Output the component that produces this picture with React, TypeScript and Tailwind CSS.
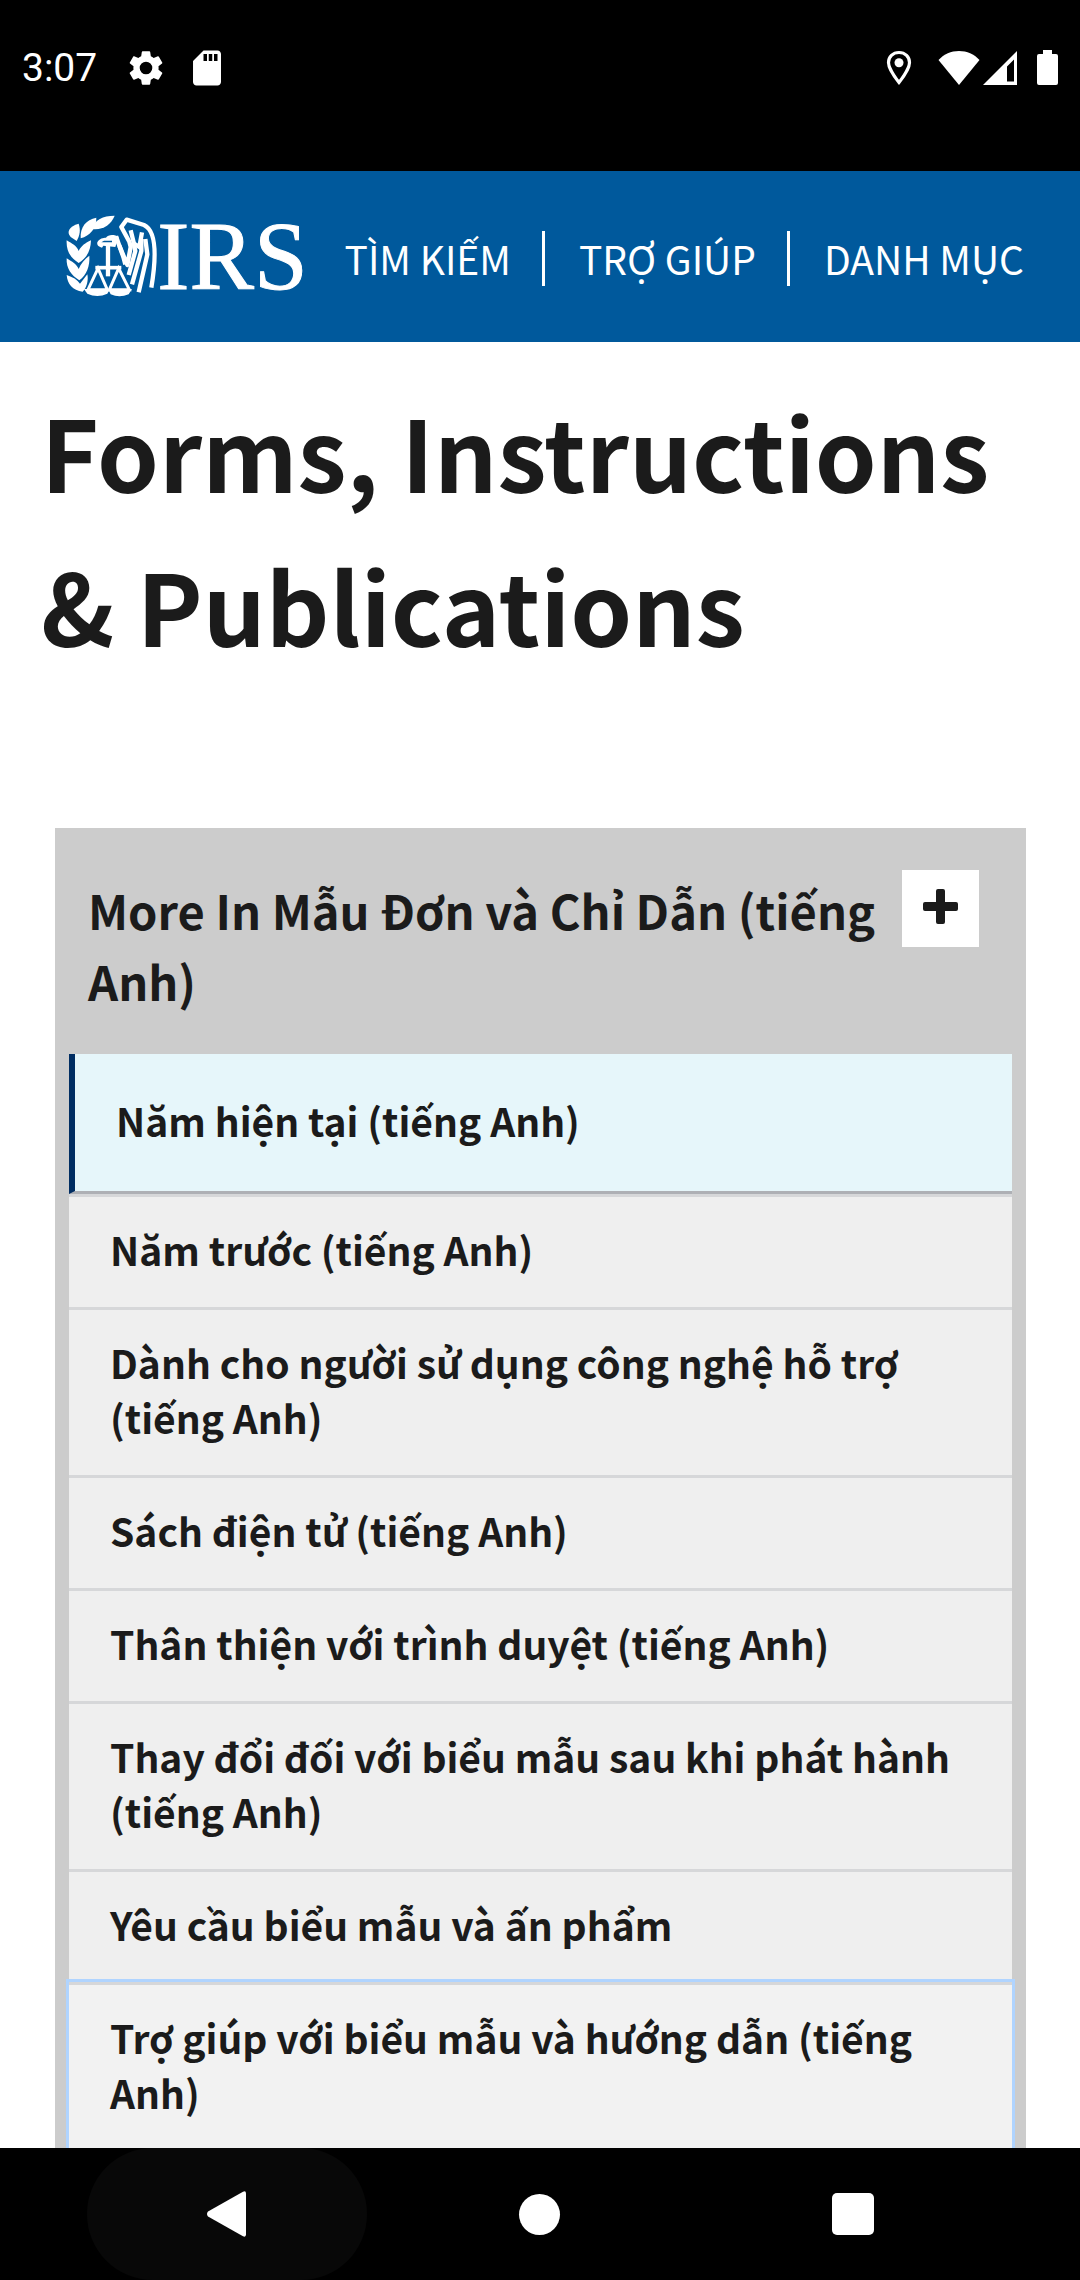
import React from "react";

type MenuItem = { label: string; state?: "current" | "focused" };

const headerLinks = ["TÌM KIẾM", "TRỢ GIÚP", "DANH MỤC"];

const menu: MenuItem[] = [
  { label: "Năm hiện tại (tiếng Anh)", state: "current" },
  { label: "Năm trước (tiếng Anh)" },
  { label: "Dành cho người sử dụng công nghệ hỗ trợ (tiếng Anh)" },
  { label: "Sách điện tử (tiếng Anh)" },
  { label: "Thân thiện với trình duyệt (tiếng Anh)" },
  { label: "Thay đổi đối với biểu mẫu sau khi phát hành (tiếng Anh)" },
  { label: "Yêu cầu biểu mẫu và ấn phẩm" },
  { label: "Trợ giúp với biểu mẫu và hướng dẫn (tiếng Anh)", state: "focused" },
];

function StatusBar() {
  return (
    <div className="flex h-[171px] shrink-0 items-start justify-between bg-black px-[22px] pt-[46px] font-['Roboto',sans-serif] text-white">
      <div className="flex h-11 items-center">
        <span className="text-[39px] leading-[48px]">3:07</span>
        <svg className="ml-[28px] size-[42px]" viewBox="0 0 24 24" fill="currentColor" aria-hidden="true">
          <path d="M19.14 12.94c.04-.3.06-.61.06-.94 0-.32-.02-.64-.07-.94l2.03-1.58a.49.49 0 0 0 .12-.61l-1.92-3.32a.488.488 0 0 0-.59-.22l-2.39.96c-.5-.38-1.03-.7-1.62-.94l-.36-2.54a.484.484 0 0 0-.48-.41h-3.84c-.24 0-.43.17-.47.41l-.36 2.54c-.59.24-1.13.57-1.62.94l-2.39-.96c-.22-.08-.47 0-.59.22L2.74 8.87c-.12.21-.08.47.12.61l2.03 1.58c-.05.3-.09.63-.09.94s.02.64.07.94l-2.03 1.58a.49.49 0 0 0-.12.61l1.92 3.32c.12.22.37.29.59.22l2.39-.96c.5.38 1.03.7 1.62.94l.36 2.54c.05.24.24.41.48.41h3.84c.24 0 .44-.17.47-.41l.36-2.54c.59-.24 1.13-.56 1.62-.94l2.39.96c.22.08.47 0 .59-.22l1.92-3.32c.12-.22.07-.47-.12-.61l-2.01-1.58zM12 15.6A3.6 3.6 0 1 1 12 8.4a3.6 3.6 0 0 1 0 7.200z" />
        </svg>
        <svg className="ml-[19px] size-[42px]" viewBox="0 0 24 24" fill="currentColor" aria-hidden="true">
          <path d="M18 2h-8L4.020 8 4 20c0 1.100.9 2 2 2h12c1.100 0 2-.9 2-2V4c0-1.100-.9-2-2-2zm-6 6h-2V4h2v4zm3 0h-2V4h2v4zm3 0h-2V4h2v4z" />
        </svg>
      </div>
      <div className="flex h-11 items-center">
        <svg className="h-[36px] w-[26px]" viewBox="0 0 26 36" aria-hidden="true">
          <path d="M13 2.500C6.800 2.500 2.500 7 2.500 12.600 2.500 19.500 13 32.500 13 32.500S23.500 19.500 23.500 12.600C23.500 7 19.200 2.500 13 2.500Z" fill="none" stroke="currentColor" strokeWidth="3.200" />
          <circle cx="13" cy="12.800" r="4.500" fill="currentColor" />
        </svg>
        <svg className="ml-[26px] h-[36px] w-[42px]" viewBox="0 0 42 36" fill="currentColor" aria-hidden="true">
          <path d="M21 35 0.500 10C6 4 13 1 21 1s15 3 20.500 9Z" />
        </svg>
        <svg className="ml-[2px] h-[36px] w-[36px]" viewBox="0 0 36 36" fill="currentColor" fillRule="evenodd" aria-hidden="true">
          <path d="M35 1V35H1ZM32 9.500 25 16.500V31.500H32Z" />
        </svg>
        <svg className="ml-[19px] h-[36px] w-[21px]" viewBox="0 0 21 36" fill="currentColor" aria-hidden="true">
          <path d="M6 0h9v4h4q2 0 2 2v27q0 2-2 2H2q-2 0-2-2V6q0-2 2-2h4Z" />
        </svg>
      </div>
    </div>
  );
}

function Logo() {
  return (
    <svg className="h-[120px] w-[248px] shrink-0" viewBox="0 -42 744 360" role="img" aria-label="IRS">
      {/* laurel branch */}
      <g fill="#fff">
        <path d="M158 14C122 14 98 26 90 54 122 58 146 42 158 14Z" />
        <path d="M103 20C72 26 54 48 56 82 84 74 104 52 103 20Z" />
        <path d="M50 38C22 46 12 62 26 78L44 90C54 72 56 56 50 38Z" />
        <path d="M14 88C30 98 44 104 50 120 58 104 70 96 87 88 86 118 76 140 50 156 28 142 12 122 14 88Z" />
        <path d="M14 142C30 152 44 160 50 174 56 158 68 144 82 134 84 166 74 192 52 208 28 194 12 172 14 142Z" />
        <path d="M14 192C32 198 46 206 54 218L76 190C80 206 74 232 62 242 32 238 16 220 14 192Z" />
      </g>
      {/* eagle head */}
      <path fill="#fff" fillRule="evenodd" d="M106 94C112 82 124 80 132 80 138 70 158 70 170 78L160 108 124 104 120 110C110 108 104 102 106 94ZM118 94H150V89H126Z" />
      {/* neck and wing */}
      <g fill="none" stroke="#fff" strokeWidth="13">
        <path d="M162 76 172 104 196 162 206 108 202 92 178 48 194 26 246 42C276 56 288 110 268 230" strokeLinejoin="round" />
        <path d="M172 104 184 138 190 160" />
        <path d="M206 58 216 98 232 108 240 64" />
        <path d="M214 94 220 120 200 192" />
        <path d="M238 84V120L210 220" />
        <path d="M250 84 256 130 230 244" />
      </g>
      {/* balance scales */}
      <g fill="none" stroke="#fff" strokeWidth="9">
        <path d="M138 104V196" strokeWidth="13" />
        <path d="M100 170H178" strokeWidth="11" />
        <path d="M108 172 78 236H136Z" />
        <path d="M170 172 142 236H202Z" />
      </g>
      <path fill="#fff" d="M66 234H144L136 248Q106 262 76 248ZM138 234H210L200 250Q172 262 146 250Z" />
      <text x="286" y="234" fill="#fff" stroke="#fff" strokeWidth="3" fontFamily="'Liberation Serif', serif" fontSize="290">IRS</text>
    </svg>
  );
}

function SiteHeader() {
  return (
    <header className="flex h-[171px] shrink-0 items-center justify-between bg-[#00599c] pr-14 pl-[62px] text-white">
      <a href="#home"><Logo /></a>
      <nav className="flex items-center pt-1">
        {headerLinks.map((label, i) => (
          <React.Fragment key={label}>
            {i > 0 && <span className="mr-[34px] ml-[31px] h-[55px] w-[3px] bg-white" />}
            <a href="#menu" className="text-[39px] leading-[55px] whitespace-nowrap">{label}</a>
          </React.Fragment>
        ))}
      </nav>
    </header>
  );
}

function MenuRow({ label, state }: MenuItem) {
  if (state === "current") {
    return (
      <li className="border-b-[3px] border-l-[6px] border-b-[#aeb0b5] border-l-[#002d62] bg-[#e6f6fa]">
        <a href="#item" aria-current="page" className="block pt-[39px] pr-10 pb-[43px] pl-[41px]">{label}</a>
      </li>
    );
  }
  return (
    <li
      className={
        state === "focused"
          ? "border-t-[3px] border-[#d6d7d9] bg-[#f2f2f2] outline-[3px] outline-[#b0d4ff]"
          : "border-t-[3px] border-[#d6d7d9] bg-[#efefef]"
      }
    >
      <a href="#item" className="block pt-[25px] pr-10 pb-[30px] pl-[41px]">{label}</a>
    </li>
  );
}

function NavBar() {
  return (
    <div className="grid h-[132px] shrink-0 grid-cols-3 bg-black px-[71px] text-white">
      <button type="button" aria-label="Back" className="mx-auto flex h-full w-[280px] items-center justify-center rounded-full bg-[#080808]">
        <svg className="h-[46px] w-[40px]" viewBox="0 0 40 46" fill="currentColor" aria-hidden="true">
          <path d="M1 20.500 36 .8q3-1.500 3 2v40.400q0 3.500-3 2L1 25.500q-2-2.500 0-5Z" />
        </svg>
      </button>
      <button type="button" aria-label="Home" className="flex h-full items-center justify-center">
        <span className="size-[41px] rounded-full bg-white" />
      </button>
      <button type="button" aria-label="Recent apps" className="flex h-full items-center justify-center">
        <span className="size-[42px] rounded-[5px] bg-white" />
      </button>
    </div>
  );
}

export default function App() {
  return (
    <div className="flex h-screen flex-col bg-white font-['Noto_Sans_CJK_SC',sans-serif] text-[#1b1b1b]" lang="vi">
      <StatusBar />
      <SiteHeader />
      <main className="min-h-0 flex-1 overflow-hidden">
        <h1 className="px-[41px] pt-[31px] text-[99px] leading-[154px] font-bold">Forms, Instructions &amp; Publications</h1>
        <section className="mt-[147px] mr-[54px] ml-[55px] bg-[#ccc] px-[14px] pb-[14px]">
          <div className="flex items-start justify-between pt-[42px] pr-[33px] pb-[38px] pl-[19px]">
            <h2 className="pt-1 text-[47px] leading-[71px] font-bold">More In Mẫu Đơn và Chỉ Dẫn (tiếng Anh)</h2>
            <button type="button" aria-label="Expand" className="flex size-[77px] shrink-0 items-center justify-center bg-white pb-1">
              <svg className="size-[35px]" viewBox="0 0 35 35" fill="currentColor" aria-hidden="true">
                <path d="M13 2q0-2 2-2h5q2 0 2 2v11h11q2 0 2 2v5q0 2-2 2H22v11q0 2-2 2h-5q-2 0-2-2V22H2q-2 0-2-2v-5q0-2 2-2h11Z" />
              </svg>
            </button>
          </div>
          <ul className="text-[39px] leading-[55px] font-bold">
            {menu.map((item) => <MenuRow key={item.label} {...item} />)}
          </ul>
        </section>
      </main>
      <NavBar />
    </div>
  );
}
